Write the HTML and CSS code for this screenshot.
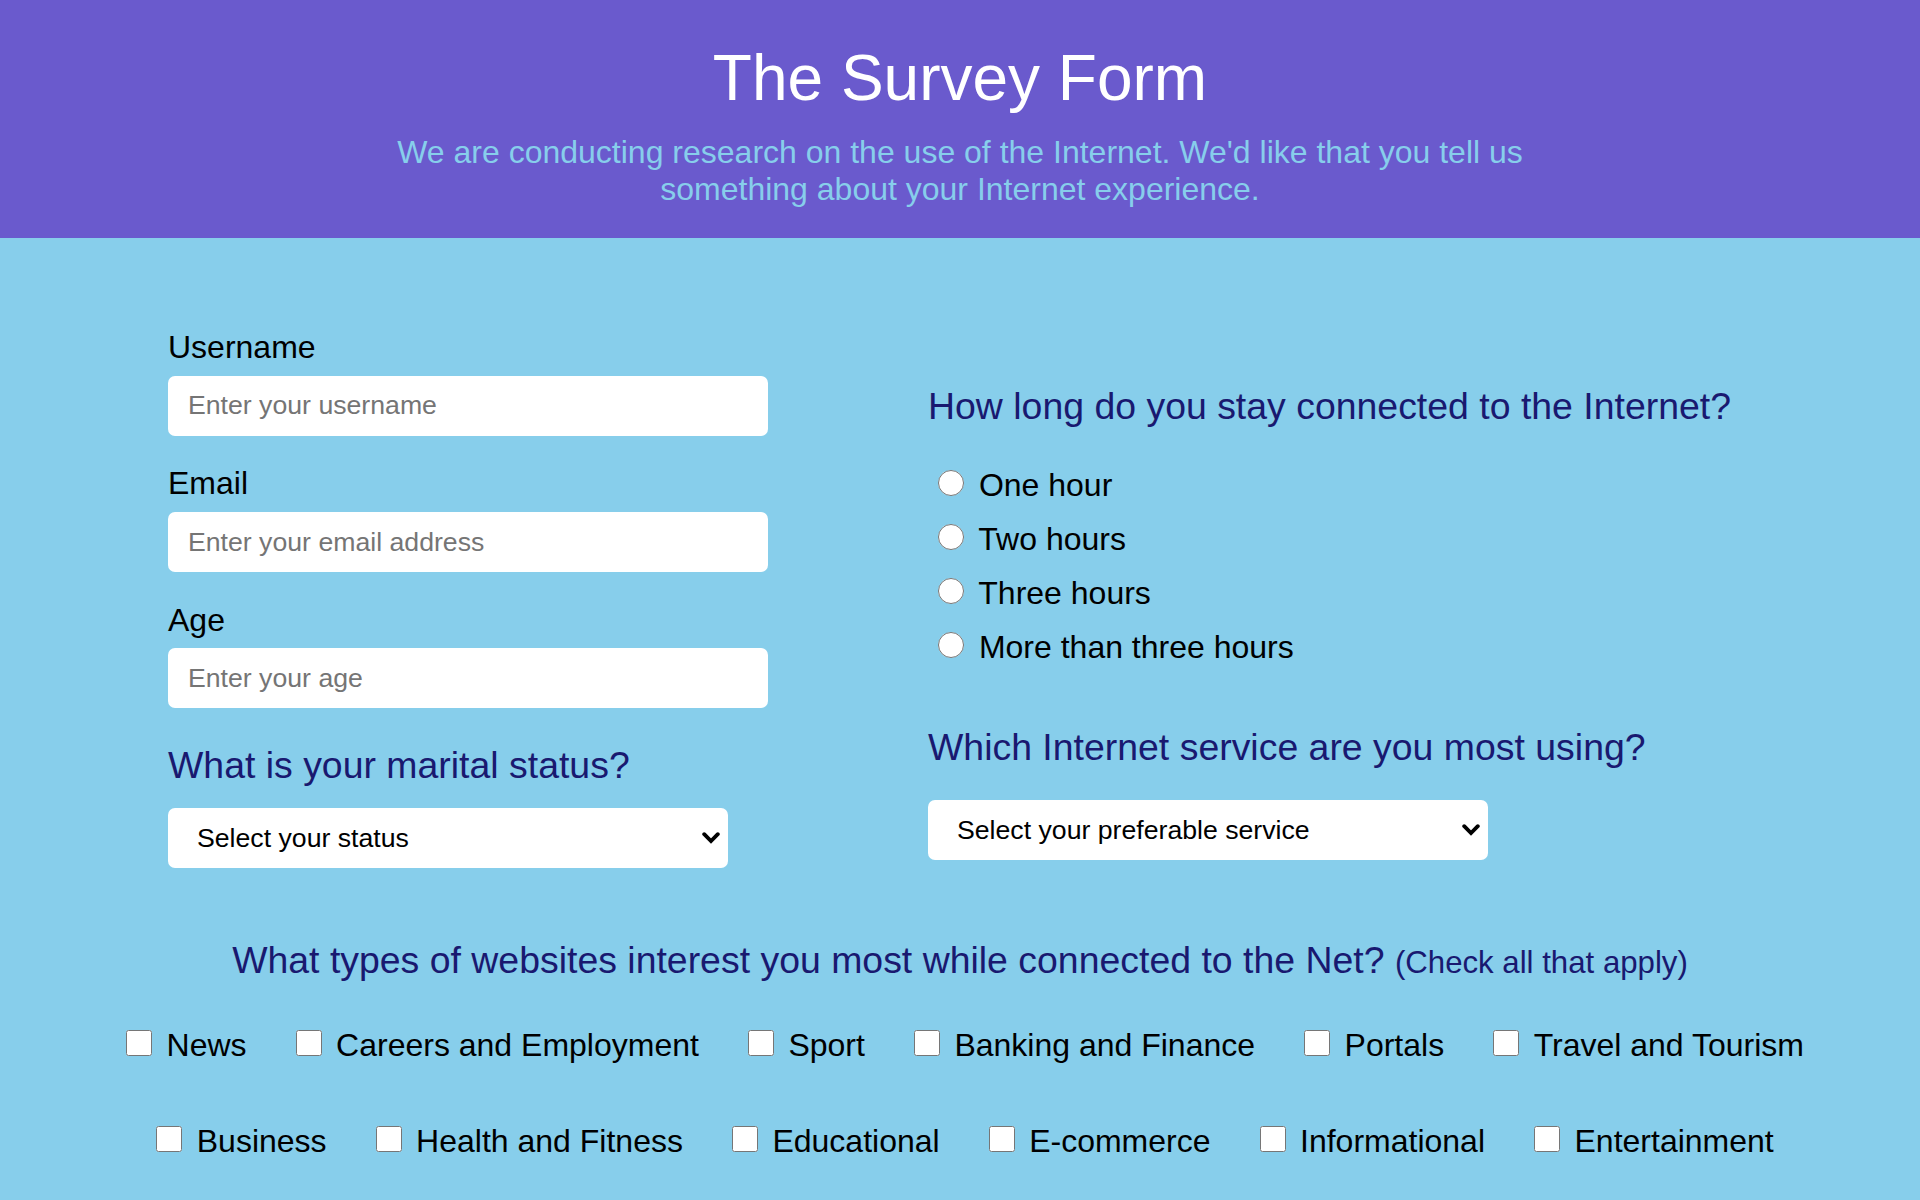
FILE: index.html
```html
<!DOCTYPE html>
<html lang="en">
<head>
<meta charset="utf-8">
<title>The Survey Form</title>
<link rel="stylesheet" href="styles.css">
</head>
<body>
<header class="hero">
  <h1 class="title">The Survey Form</h1>
  <p class="intro">We are conducting research on the use of the Internet. We'd like that you tell us something about your Internet experience.</p>
</header>
<form class="survey">
  <div class="columns">
    <div class="col col-left">
      <div class="field">
        <label class="field-label" for="username">Username</label>
        <input class="text-input" id="username" type="text" placeholder="Enter your username">
      </div>
      <div class="field">
        <label class="field-label" for="email">Email</label>
        <input class="text-input" id="email" type="email" placeholder="Enter your email address">
      </div>
      <div class="field">
        <label class="field-label" for="age">Age</label>
        <input class="text-input" id="age" type="number" placeholder="Enter your age">
      </div>
      <h3 class="question q-marital">What is your marital status?</h3>
      <div class="select-wrap">
        <select class="select">
          <option>Select your status</option>
          <option>Single</option>
          <option>Married</option>
          <option>Divorced</option>
          <option>Widowed</option>
        </select>
        <svg class="chev" width="18" height="12" viewBox="0 0 18 12" aria-hidden="true"><path d="M2.2 2.2 L9 9 L15.8 2.2" fill="none" stroke="#000" stroke-width="3.8" stroke-linecap="round" stroke-linejoin="miter"/></svg>
      </div>
    </div>
    <div class="col col-right">
      <h3 class="question q-time">How long do you stay connected to the Internet?</h3>
      <div class="radios">
        <label class="radio-row"><input class="radio" type="radio" name="time"> One hour</label>
        <label class="radio-row"><input class="radio" type="radio" name="time"> Two hours</label>
        <label class="radio-row"><input class="radio" type="radio" name="time"> Three hours</label>
        <label class="radio-row"><input class="radio" type="radio" name="time"> More than three hours</label>
      </div>
      <h3 class="question q-service">Which Internet service are you most using?</h3>
      <div class="select-wrap">
        <select class="select">
          <option>Select your preferable service</option>
          <option>E-mail</option>
          <option>Web browsing</option>
          <option>Social networks</option>
          <option>Streaming</option>
        </select>
        <svg class="chev" width="18" height="12" viewBox="0 0 18 12" aria-hidden="true"><path d="M2.2 2.2 L9 9 L15.8 2.2" fill="none" stroke="#000" stroke-width="3.8" stroke-linecap="round" stroke-linejoin="miter"/></svg>
      </div>
    </div>
  </div>
  <div class="interests">
    <h3 class="question q-interests">What types of websites interest you most while connected to the Net? <small class="hint">(Check all that apply)</small></h3>
    <div class="check-row row-one">
      <label class="check-item"><input class="check" type="checkbox">News</label>
      <label class="check-item"><input class="check" type="checkbox">Careers and Employment</label>
      <label class="check-item"><input class="check" type="checkbox">Sport</label>
      <label class="check-item"><input class="check" type="checkbox">Banking and Finance</label>
      <label class="check-item"><input class="check" type="checkbox">Portals</label>
      <label class="check-item"><input class="check" type="checkbox">Travel and Tourism</label>
    </div>
    <div class="check-row row-two">
      <label class="check-item"><input class="check" type="checkbox">Business</label>
      <label class="check-item"><input class="check" type="checkbox">Health and Fitness</label>
      <label class="check-item"><input class="check" type="checkbox">Educational</label>
      <label class="check-item"><input class="check" type="checkbox">E-commerce</label>
      <label class="check-item"><input class="check" type="checkbox">Informational</label>
      <label class="check-item"><input class="check" type="checkbox">Entertainment</label>
    </div>
  </div>
</form>
</body>
</html>
```

FILE: styles.css
```css
html, body {
  margin: 0;
  padding: 0;
}

body {
  background: #87ceeb;
  font-family: "Liberation Sans", Arial, sans-serif;
  font-size: 32px;
  color: #000;
  min-height: 1200px;
}

.hero {
  background: #6a5acd;
  text-align: center;
  padding: 41px 0 30px;
}

.title {
  margin: 0;
  font-size: 64px;
  font-weight: normal;
  color: #fff;
  line-height: normal;
}

.intro {
  margin: 19px auto 0;
  max-width: 1190px;
  color: #87ceeb;
  font-size: 32px;
  line-height: normal;
}

.survey {
  margin: 0;
}

.columns {
  display: grid;
  grid-template-columns: 600px 1fr;
  column-gap: 160px;
  padding: 91.2px 0 0 168px;
  align-items: start;
}

.field + .field {
  margin-top: 29.4px;
}

.field-label {
  display: block;
  line-height: normal;
  margin-bottom: 9.8px;
}

.text-input {
  display: block;
  box-sizing: border-box;
  width: 600px;
  height: 60px;
  margin: 0;
  padding: 0 20px;
  border: none;
  border-radius: 7px;
  background: #fff;
  font-family: "Liberation Sans", Arial, sans-serif;
  font-size: 26.67px;
  color: #000;
  outline: none;
}

.text-input::placeholder {
  color: #757575;
}

.text-input::-webkit-outer-spin-button,
.text-input::-webkit-inner-spin-button {
  -webkit-appearance: none;
  margin: 0;
}

.question {
  margin: 0;
  font-size: 37.44px;
  font-weight: normal;
  color: #191970;
  line-height: normal;
  white-space: nowrap;
}

.q-marital {
  margin: 35.3px 0 21px;
}

.col-right {
  padding-top: 56.3px;
}

.radios {
  margin-top: 29.4px;
}

.radio-row {
  display: block;
  height: 54px;
  line-height: 54px;
}

.radio {
  width: 26px;
  height: 26px;
  margin: 0 6px 0 10px;
  vertical-align: baseline;
}

.q-service {
  margin: 52.6px 0 30.3px;
}

.select-wrap {
  position: relative;
  width: 560px;
  height: 60px;
}

.select {
  -webkit-appearance: none;
  appearance: none;
  display: block;
  box-sizing: border-box;
  width: 560px;
  height: 60px;
  margin: 0;
  padding: 0 44px 0 29px;
  border: none;
  border-radius: 7px;
  background: #fff;
  font-family: "Liberation Sans", Arial, sans-serif;
  font-size: 26.67px;
  color: #000;
  outline: none;
}

.chev {
  position: absolute;
  right: 8px;
  top: 24px;
  pointer-events: none;
}

.interests {
  text-align: center;
}

.q-interests {
  margin: 71.6px 0 0;
}

.hint {
  font-size: 31.2px;
}

.check-row {
  display: flex;
  justify-content: center;
  column-gap: 49px;
  padding-left: 10px;
  line-height: normal;
}

.row-one {
  margin-top: 45.2px;
}

.row-two {
  margin-top: 58.2px;
}

.check-item {
  display: block;
  white-space: nowrap;
}

.check {
  width: 26px;
  height: 26px;
  margin: 0 14.5px 0 0;
  vertical-align: baseline;
}
```
